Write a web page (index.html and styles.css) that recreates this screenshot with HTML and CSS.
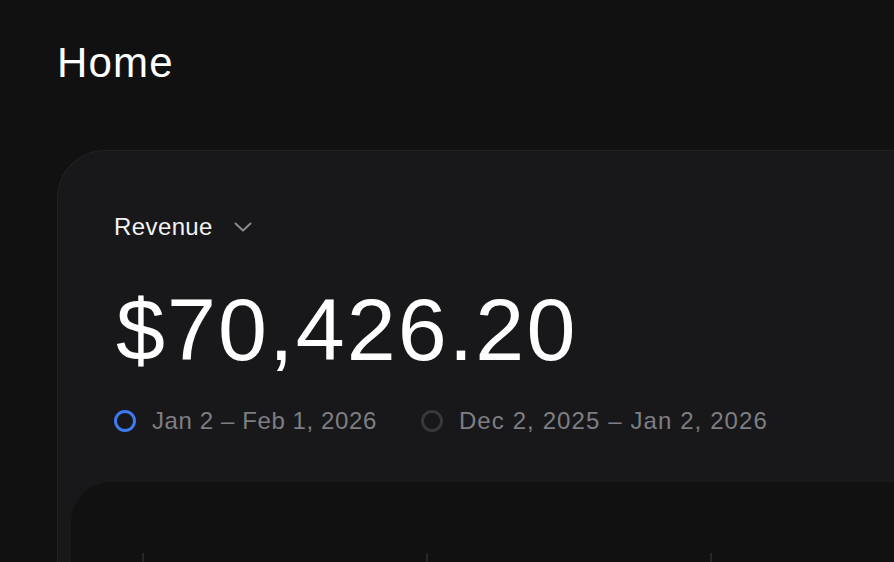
FILE: index.html
```html
<!DOCTYPE html>
<html lang="en">
<head>
<meta charset="utf-8">
<title>Home</title>
<link rel="stylesheet" href="styles.css">
</head>
<body>
<main class="page">
  <h1 class="title">Home</h1>
  <section class="card">
    <div class="card-head">
      <button class="metric-select" type="button">
        <span>Revenue</span>
        <svg class="chev" width="18" height="10" viewBox="0 0 18 10" aria-hidden="true">
          <polyline points="1.5,1.5 9,8.5 16.5,1.5" fill="none" stroke="#8b8b8f" stroke-width="2" stroke-linecap="round" stroke-linejoin="round"/>
        </svg>
      </button>
      <div class="amount">$70,426.20</div>
      <div class="legend">
        <div class="legend-item"><span class="dot dot-current"></span><span>Jan 2 – Feb 1, 2026</span></div>
        <div class="legend-item legend-prev"><span class="dot dot-prev"></span><span>Dec 2, 2025 – Jan 2, 2026</span></div>
      </div>
    </div>
    <div class="chart">
      <div class="grid-lines">
        <span class="vline"></span>
        <span class="vline"></span>
        <span class="vline"></span>
      </div>
    </div>
  </section>
</main>
</body>
</html>
```
FILE: styles.css
```css
html, body {
  margin: 0;
  padding: 0;
  background: #111111;
}
body {
  width: 894px;
  height: 562px;
  overflow: hidden;
  font-family: "Liberation Sans", Arial, sans-serif;
  color: #ffffff;
}
.page {
  box-sizing: border-box;
  height: 562px;
  padding: 42px 0 0 57px;
  display: flex;
  flex-direction: column;
}
.title {
  margin: 0;
  font-size: 42px;
  line-height: 42px;
  font-weight: 400;
  letter-spacing: 1.2px;
  color: #ffffff;
}
.card {
  box-sizing: border-box;
  margin-top: 66px;
  flex: 1;
  min-height: 0;
  overflow: hidden;
  display: flex;
  flex-direction: column;
  background: #18181a;
  border-top: 1px solid #232326;
  border-left: 1px solid #232326;
  border-radius: 48px 0 0 0;
  padding: 0 0 0 13px;
}
.card-head {
  padding: 64px 0 0 43px;
}
.metric-select {
  display: flex;
  align-items: center;
  gap: 21px;
  background: none;
  border: 0;
  padding: 0;
  margin: 0;
  color: #f2f2f3;
  font-family: inherit;
  font-size: 24px;
  line-height: 24px;
  letter-spacing: 0.4px;
  cursor: pointer;
}
.chev {
  display: block;
}
.amount {
  margin: 47px 0 0 2px;
  font-size: 88px;
  line-height: 88px;
  letter-spacing: 2.1px;
  color: #ffffff;
}
.legend {
  margin-top: 35px;
  display: flex;
  gap: 44px;
  font-size: 24px;
  line-height: 24px;
  letter-spacing: 0.6px;
  color: #7e7e83;
}
.legend-item {
  display: flex;
  align-items: center;
  gap: 16px;
}
.legend-prev {
  letter-spacing: 1.1px;
}
.dot {
  width: 16px;
  height: 16px;
  border-radius: 50%;
  border: 3px solid #3d7bf2;
  flex: none;
}
.dot-prev {
  border-color: #38383b;
}
.chart {
  margin-top: 49px;
  flex: 1;
  min-height: 0;
  background: #111111;
  border-radius: 40px 0 0 0;
  display: flex;
  flex-direction: column;
}
.grid-lines {
  flex: 1;
  display: flex;
  gap: 282px;
  padding: 71px 0 0 71px;
}
.vline {
  width: 2px;
  background: #262628;
}
```
